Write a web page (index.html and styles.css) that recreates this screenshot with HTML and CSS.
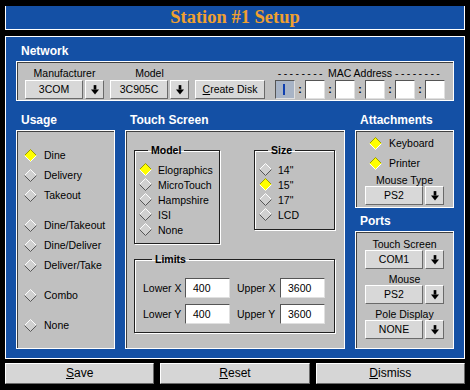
FILE: index.html
```html
<!DOCTYPE html>
<html lang="en">
<head>
  <meta charset="UTF-8">
  <title>Station #1 Setup</title>
  <link rel="stylesheet" href="styles.css">
</head>
<body>
  <svg class="sprite" xmlns="http://www.w3.org/2000/svg">
    <symbol id="arrow" viewBox="0 0 9 11">
      <rect x="3" y="0" width="3" height="5" fill="#000" />
      <polygon points="0,5 9,5 4.5,10.5" fill="#000" />
    </symbol>
    <symbol id="radio-off" viewBox="0 0 13 13">
      <polygon points="6.5,0.5 12.5,6.5 6.5,12.5 0.5,6.5" fill="#d0d0d0" />
      <polyline points="0.5,6.5 6.5,0.5 12.5,6.5" fill="none" stroke="#fff" />
      <polyline points="12.5,6.5 6.5,12.5 0.5,6.5" fill="none" stroke="#555" />
    </symbol>
    <symbol id="radio-on" viewBox="0 0 13 13">
      <polygon points="6.5,0.5 12.5,6.5 6.5,12.5 0.5,6.5" fill="#ffff00" />
      <polyline points="0.5,6.5 6.5,0.5 12.5,6.5" fill="none" stroke="#9a9a00" />
      <polyline points="12.5,6.5 6.5,12.5 0.5,6.5" fill="none" stroke="#fff" />
    </symbol>
  </svg>

  <div class="titlebar">Station #1 Setup</div>

  <div class="panel">
    <div class="section-title">Network</div>
    <div class="well network">
      <div class="field">
        <div class="field-label">Manufacturer</div>
        <div class="combo">
          <span class="combo-value">3COM</span>
          <span class="combo-btn"><svg class="arrow"><use href="#arrow" /></svg></span>
        </div>
      </div>
      <div class="field">
        <div class="field-label">Model</div>
        <div class="combo">
          <span class="combo-value">3C905C</span>
          <span class="combo-btn"><svg class="arrow"><use href="#arrow" /></svg></span>
        </div>
      </div>
      <div class="btn create-disk"><u>C</u>reate Disk</div>
      <div class="mac">
        <div class="field-label"><span class="dashes">--------</span> MAC Address <span class="dashes">--------</span></div>
        <div class="mac-boxes">
          <span class="mac-box focused"><span class="caret"></span></span>
          <span class="mac-sep">:</span>
          <span class="mac-box"></span>
          <span class="mac-sep">:</span>
          <span class="mac-box"></span>
          <span class="mac-sep">:</span>
          <span class="mac-box"></span>
          <span class="mac-sep">:</span>
          <span class="mac-box"></span>
          <span class="mac-sep">:</span>
          <span class="mac-box"></span>
        </div>
      </div>
    </div>

    <div class="columns">
      <div class="col">
        <div class="section-title col-title">Usage</div>
        <div class="well usage">
          <div class="radio-group">
            <div class="radio"><svg class="diamond"><use href="#radio-on" /></svg>Dine</div>
            <div class="radio"><svg class="diamond"><use href="#radio-off" /></svg>Delivery</div>
            <div class="radio"><svg class="diamond"><use href="#radio-off" /></svg>Takeout</div>
          </div>
          <div class="radio-group">
            <div class="radio"><svg class="diamond"><use href="#radio-off" /></svg>Dine/Takeout</div>
            <div class="radio"><svg class="diamond"><use href="#radio-off" /></svg>Dine/Deliver</div>
            <div class="radio"><svg class="diamond"><use href="#radio-off" /></svg>Deliver/Take</div>
          </div>
          <div class="radio-group">
            <div class="radio"><svg class="diamond"><use href="#radio-off" /></svg>Combo</div>
          </div>
          <div class="radio-group">
            <div class="radio"><svg class="diamond"><use href="#radio-off" /></svg>None</div>
          </div>
        </div>
      </div>

      <div class="col">
        <div class="section-title col-title">Touch Screen</div>
        <div class="well touch">
          <div class="touch-top">
            <fieldset class="group model">
              <legend>Model</legend>
              <div class="radio small"><svg class="diamond"><use href="#radio-on" /></svg>Elographics</div>
              <div class="radio small"><svg class="diamond"><use href="#radio-off" /></svg>MicroTouch</div>
              <div class="radio small"><svg class="diamond"><use href="#radio-off" /></svg>Hampshire</div>
              <div class="radio small"><svg class="diamond"><use href="#radio-off" /></svg>ISI</div>
              <div class="radio small"><svg class="diamond"><use href="#radio-off" /></svg>None</div>
            </fieldset>
            <fieldset class="group size">
              <legend>Size</legend>
              <div class="radio small"><svg class="diamond"><use href="#radio-off" /></svg>14"</div>
              <div class="radio small"><svg class="diamond"><use href="#radio-on" /></svg>15"</div>
              <div class="radio small"><svg class="diamond"><use href="#radio-off" /></svg>17"</div>
              <div class="radio small"><svg class="diamond"><use href="#radio-off" /></svg>LCD</div>
            </fieldset>
          </div>
          <fieldset class="group limits">
            <legend>Limits</legend>
            <div class="limits-grid">
              <span class="limit-label">Lower X</span>
              <span class="input">400</span>
              <span class="limit-label upper">Upper X</span>
              <span class="input">3600</span>
              <span class="limit-label">Lower Y</span>
              <span class="input">400</span>
              <span class="limit-label upper">Upper Y</span>
              <span class="input">3600</span>
            </div>
          </fieldset>
        </div>
      </div>

      <div class="col">
        <div class="section-title col-title">Attachments</div>
        <div class="well attachments">
          <div class="radio"><svg class="diamond"><use href="#radio-on" /></svg>Keyboard</div>
          <div class="radio"><svg class="diamond"><use href="#radio-on" /></svg>Printer</div>
          <div class="field-label">Mouse Type</div>
          <div class="combo">
            <span class="combo-value">PS2</span>
            <span class="combo-btn"><svg class="arrow"><use href="#arrow" /></svg></span>
          </div>
        </div>
        <div class="section-title ports-title">Ports</div>
        <div class="well ports">
          <div class="port">
            <div class="field-label">Touch Screen</div>
            <div class="combo">
              <span class="combo-value">COM1</span>
              <span class="combo-btn"><svg class="arrow"><use href="#arrow" /></svg></span>
            </div>
          </div>
          <div class="port">
            <div class="field-label">Mouse</div>
            <div class="combo">
              <span class="combo-value">PS2</span>
              <span class="combo-btn"><svg class="arrow"><use href="#arrow" /></svg></span>
            </div>
          </div>
          <div class="port">
            <div class="field-label">Pole Display</div>
            <div class="combo">
              <span class="combo-value">NONE</span>
              <span class="combo-btn"><svg class="arrow"><use href="#arrow" /></svg></span>
            </div>
          </div>
        </div>
      </div>
    </div>
  </div>

  <div class="actions">
    <div class="btn action"><u>S</u>ave</div>
    <div class="btn action"><u>R</u>eset</div>
    <div class="btn action"><u>D</u>ismiss</div>
  </div>
</body>
</html>
```

FILE: styles.css
```css
body {
  margin: 0;
  width: 470px;
  height: 390px;
  overflow: hidden;
  background-color: #000;
  font-family: 'Liberation Sans', Arial, sans-serif;
  font-size: 10.5px;
  color: #000;
}
.sprite {
  display: none;
}
.titlebar {
  margin: 6px 5px 0;
  height: 23px;
  line-height: 23px;
  background-color: #1450a5;
  border: 1px solid #fff;
  border-top: 0;
  color: #f0a030;
  font-family: 'Liberation Serif', 'Times New Roman', serif;
  font-weight: bold;
  font-size: 18.5px;
  text-align: center;
}
.panel {
  margin: 6px 5px 0;
  height: 311px;
  padding: 0 10px 10px;
  background-color: #1450a5;
  border: 1px solid #fff;
}
.section-title {
  color: #fff;
  font-weight: bold;
  font-size: 12px;
  line-height: 16px;
  padding: 6px 0 0 5px;
  margin-bottom: 2px;
}
.col-title {
  padding-top: 11px;
}
.ports-title {
  padding-top: 5px;
}
.well {
  background-color: #c0c0c0;
  border: 1px solid #fff;
  box-shadow: inset 1px 1px 0 #404040;
}

/* network row */
.network {
  display: flex;
  align-items: flex-end;
  gap: 6px;
  height: 38px;
  padding: 0 8px;
}
.field-label {
  line-height: 12px;
  text-align: center;
  white-space: nowrap;
}
.network .field-label {
  margin-bottom: 1px;
}
.combo {
  display: flex;
  gap: 2px;
  height: 19px;
  margin-bottom: 1px;
}
.combo-value,
.combo-btn,
.btn {
  box-sizing: border-box;
  background-color: #d8d8d8;
  border: 1px solid #fff;
  border-right-color: #6a6a6a;
  border-bottom-color: #6a6a6a;
}
.combo-value {
  width: 58px;
  line-height: 17px;
  text-align: center;
}
.combo-btn {
  width: 19px;
  display: flex;
  align-items: center;
  justify-content: center;
}
.arrow {
  width: 8px;
  height: 10px;
}
.btn {
  text-align: center;
}
.create-disk {
  width: 70px;
  height: 19px;
  line-height: 17px;
  margin-bottom: 1px;
}
.mac {
  margin-left: 4px;
}
.dashes {
  letter-spacing: 2.4px;
}
.mac-boxes {
  display: flex;
  height: 19px;
  margin-bottom: 1px;
}
.mac-box {
  box-sizing: border-box;
  width: 20px;
  background-color: #fff;
  border: 1px solid #e0e0e0;
  border-top-color: #555;
  border-left-color: #555;
}
.mac-box.focused {
  background-color: #a8b4c6;
  display: flex;
  align-items: center;
  padding-left: 7px;
}
.caret {
  width: 2px;
  height: 11px;
  background-color: #1040b0;
}
.mac-sep {
  width: 10px;
  line-height: 19px;
  text-align: center;
  font-weight: bold;
}

/* columns */
.columns {
  display: grid;
  grid-template-columns: 99px 220px 99px;
  column-gap: 10px;
}
.col {
  display: flex;
  flex-direction: column;
  height: 248px;
}
.usage {
  flex: 1;
  padding: 14px 0 0 7px;
}
.radio-group {
  margin-bottom: 10px;
}
.radio {
  display: flex;
  align-items: center;
  height: 20px;
  white-space: nowrap;
}
.diamond {
  width: 13px;
  height: 13px;
  margin-right: 7px;
  flex-shrink: 0;
}
.radio.small {
  height: 15px;
}
.radio.small .diamond {
  margin-right: 6px;
}

/* touch screen */
.touch {
  flex: 1;
  padding: 12px 9px 0 8px;
}
.touch-top {
  display: flex;
  justify-content: space-between;
  align-items: flex-start;
}
.group {
  margin: 0;
  border: 1px solid #202020;
  box-shadow: 1px 1px 0 #fff, inset 1px 1px 0 #fff;
  padding: 5px 4px 6px;
}
.group legend {
  font-weight: bold;
  line-height: 14px;
  padding: 0 3px;
  margin-left: 9px;
}
.model {
  width: 76px;
}
.size {
  width: 71px;
  padding-bottom: 7px;
}
.limits {
  margin-top: 8px;
  padding: 12px 9px 8px 8px;
}
.limits-grid {
  display: grid;
  grid-template-columns: 42px 45px 50px 45px;
  row-gap: 6px;
}
.limit-label {
  line-height: 20px;
  white-space: nowrap;
}
.limit-label.upper {
  padding-left: 7px;
}
.input {
  box-sizing: border-box;
  height: 20px;
  line-height: 18px;
  padding-left: 7px;
  background-color: #fff;
  border: 1px solid #e0e0e0;
  border-top-color: #555;
  border-left-color: #555;
}

/* right column */
.attachments {
  height: 73px;
  padding: 3px 0 0 0;
}
.attachments .radio {
  height: 18px;
  margin-bottom: 2px;
  padding-left: 13px;
}
.attachments .combo,
.ports .combo {
  justify-content: center;
}
.ports {
  flex: 1;
  padding-top: 6px;
}
.port {
  margin-bottom: 4px;
}

/* bottom buttons */
.actions {
  display: flex;
  gap: 6px;
  margin: 4px 5px 0;
}
.action {
  flex: 1;
  height: 21px;
  line-height: 19px;
  font-size: 12px;
  background-color: #d6d6d6;
}
```
